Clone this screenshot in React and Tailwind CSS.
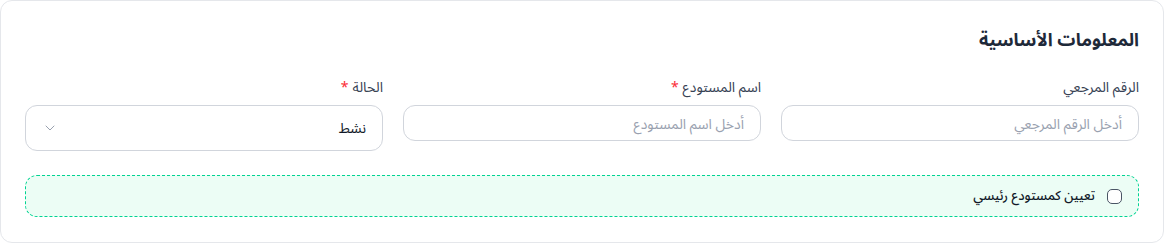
import React from 'react';
import { ChevronDown } from 'lucide-react';

function Label({ children, required }) {
  return (
    <label className="block text-sm text-gray-700 mb-2 leading-5">
      {children}
      {required && <span className="text-red-500 mr-1">*</span>}
    </label>
  );
}

export default function App() {
  return (
    <div dir="rtl" className="bg-white" style={{ fontFamily: '"Noto Sans", "Noto Sans Arabic", "DejaVu Sans", sans-serif' }}>
      <div className="w-[1164px] h-[243px] border border-gray-200 rounded-xl bg-white px-6 pt-6">
        <h2 className="text-lg font-bold text-gray-800 leading-7 mb-6">المعلومات الأساسية</h2>

        <div className="grid grid-cols-3 gap-5 items-start">
          <div>
            <Label>الرقم المرجعي</Label>
            <input
              type="text"
              placeholder="أدخل الرقم المرجعي"
              className="w-full h-9 rounded-xl border border-gray-300 px-4 text-sm text-gray-800 placeholder:text-gray-400 outline-none"
            />
          </div>
          <div>
            <Label required>اسم المستودع</Label>
            <input
              type="text"
              placeholder="أدخل اسم المستودع"
              className="w-full h-9 rounded-xl border border-gray-300 px-4 text-sm text-gray-800 placeholder:text-gray-400 outline-none"
            />
          </div>
          <div>
            <Label required>الحالة</Label>
            <div className="w-full h-[46px] rounded-xl border border-gray-300 px-4 flex items-center justify-between">
              <span className="text-sm text-gray-900">نشط</span>
              <ChevronDown className="w-4 h-4 text-gray-400" strokeWidth={1.5} />
            </div>
          </div>
        </div>

        <div className="mt-6 h-[42px] rounded-xl border border-dashed border-emerald-400 bg-emerald-50 px-4 flex items-center gap-3">
          <span className="w-[15px] h-[15px] rounded-[5px] border border-gray-600 bg-white"></span>
          <span className="text-[13px] font-medium text-gray-900">تعيين كمستودع رئيسي</span>
        </div>
      </div>
    </div>
  );
}
